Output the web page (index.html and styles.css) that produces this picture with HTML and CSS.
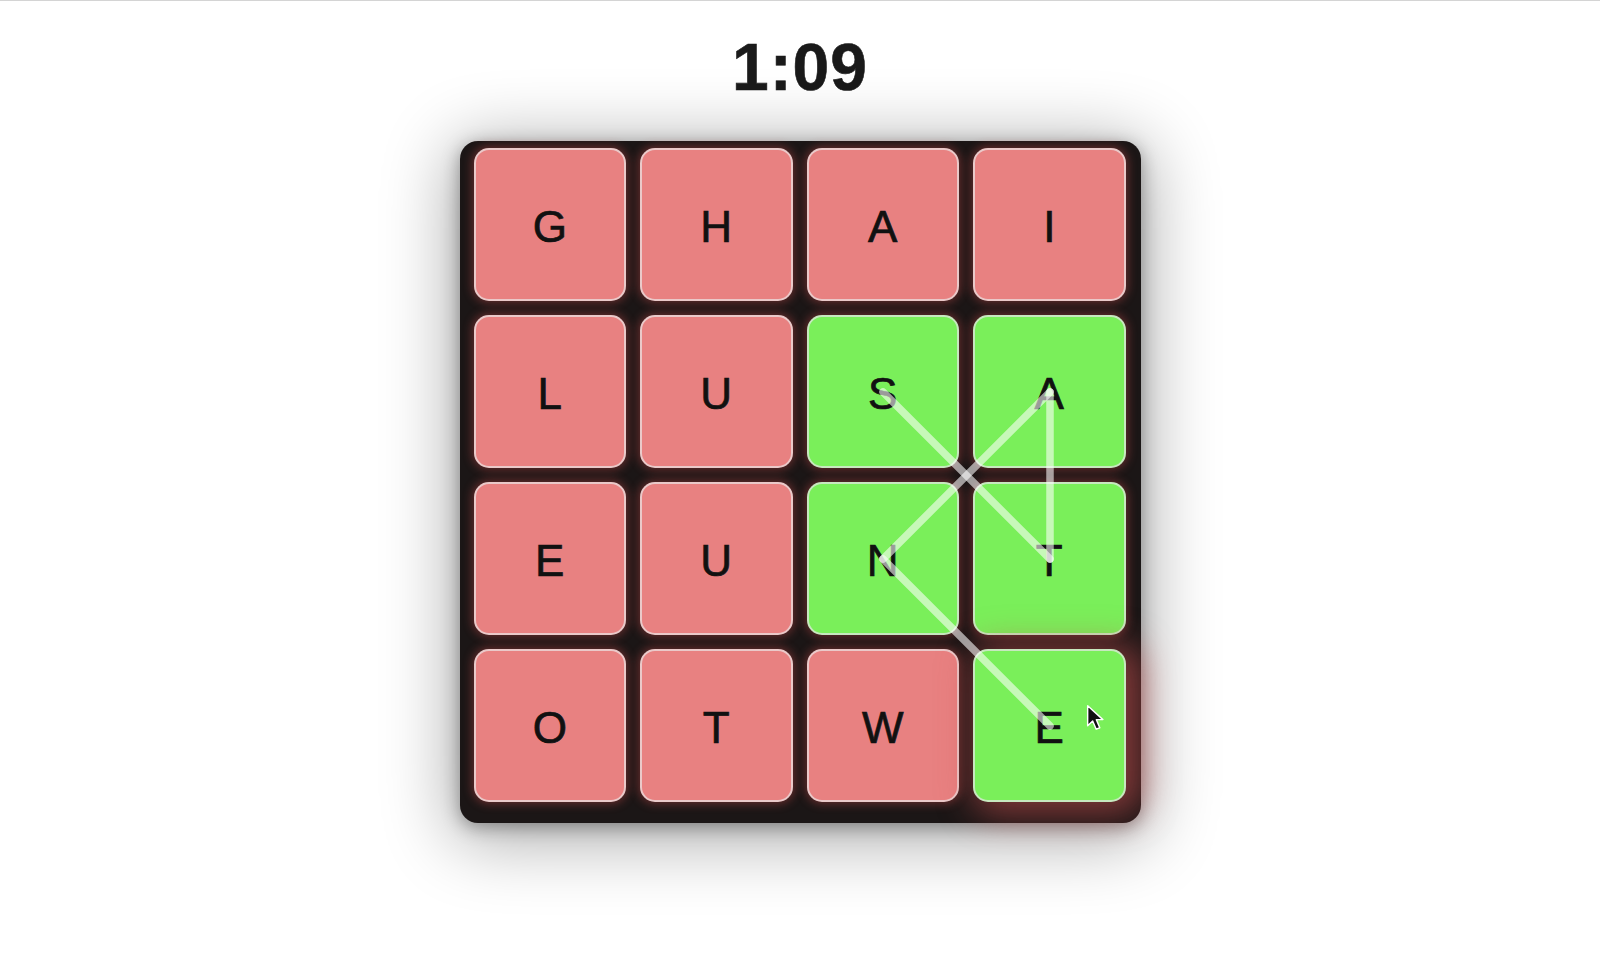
FILE: index.html
```html
<!DOCTYPE html>
<html lang="en">
<head>
<meta charset="utf-8">
<title>Word Grid</title>
<link rel="stylesheet" href="styles.css">
</head>
<body>
<main class="game">
  <div class="timer">1:09</div>
  <div class="board">
    <div class="grid">
      <div class="tile">G</div>
      <div class="tile">H</div>
      <div class="tile">A</div>
      <div class="tile">I</div>
      <div class="tile">L</div>
      <div class="tile">U</div>
      <div class="tile on">S</div>
      <div class="tile on">A</div>
      <div class="tile">E</div>
      <div class="tile">U</div>
      <div class="tile on">N</div>
      <div class="tile on">T</div>
      <div class="tile">O</div>
      <div class="tile">T</div>
      <div class="tile">W</div>
      <div class="tile on last">E</div>
    </div>
    <svg class="path" width="681" height="682" viewBox="0 0 681 682">
      <line x1="423" y1="251" x2="590" y2="418"/>
      <line x1="590" y1="418" x2="590" y2="251"/>
      <line x1="590" y1="251" x2="423" y2="418"/>
      <line x1="423" y1="418" x2="590" y2="585"/>
    </svg>
    <svg class="cursor" width="20" height="29" viewBox="0 0 18 26">
      <path d="M1.5 1.5 L1.5 19.5 L6 15.2 L9.2 22.6 L12.4 21.3 L9.3 14 L15.2 14 Z"/>
    </svg>
  </div>
</main>
</body>
</html>
```

FILE: styles.css
```css
html, body {
  margin: 0;
  padding: 0;
  background: #ffffff;
}

body {
  border-top: 1px solid #d4d4d4;
  font-family: "Liberation Sans", Arial, sans-serif;
  min-height: 962px;
  overflow: hidden;
}

.game {
  display: flex;
  flex-direction: column;
  align-items: center;
}

.timer {
  margin-top: 33px;
  font-size: 66px;
  line-height: 66px;
  font-weight: 700;
  color: #1a1a1a;
  letter-spacing: 1px;
  -webkit-text-stroke: 0.6px #1a1a1a;
}

.board {
  position: relative;
  margin-top: 41px;
  width: 681px;
  height: 682px;
  box-sizing: border-box;
  padding: 7px 15px 21px 14px;
  background: #1b1616;
  border-radius: 18px;
  box-shadow: 0 10px 70px 8px rgba(0, 0, 0, 0.33), 0 4px 18px rgba(0, 0, 0, 0.35);
}

.grid {
  display: grid;
  grid-template-columns: repeat(4, 1fr);
  grid-template-rows: repeat(4, 1fr);
  gap: 14px;
  width: 100%;
  height: 100%;
}

.tile {
  display: flex;
  align-items: center;
  justify-content: center;
  box-sizing: border-box;
  border-radius: 15px;
  background: #e88181;
  border: 2px solid rgba(235, 225, 225, 0.75);
  box-shadow: 0 0 10px 2px rgba(190, 70, 70, 0.45);
  font-size: 44px;
  color: #111111;
  -webkit-text-stroke: 0.7px #111111;
  padding-top: 4px;
}

.tile.on {
  background: #7aef5a;
  border-color: rgba(225, 230, 225, 0.75);
}

.tile.last {
  box-shadow: 8px 4px 34px 8px rgba(200, 80, 80, 0.6);
}

.path {
  position: absolute;
  left: 0;
  top: 0;
  pointer-events: none;
}

.path line {
  stroke: rgba(255, 255, 255, 0.58);
  stroke-width: 7.5;
  stroke-linecap: round;
}

.cursor {
  position: absolute;
  left: 626px;
  top: 563px;
}

.cursor path {
  fill: #111111;
  stroke: #ffffff;
  stroke-width: 1.3;
  stroke-linejoin: round;
}
```
